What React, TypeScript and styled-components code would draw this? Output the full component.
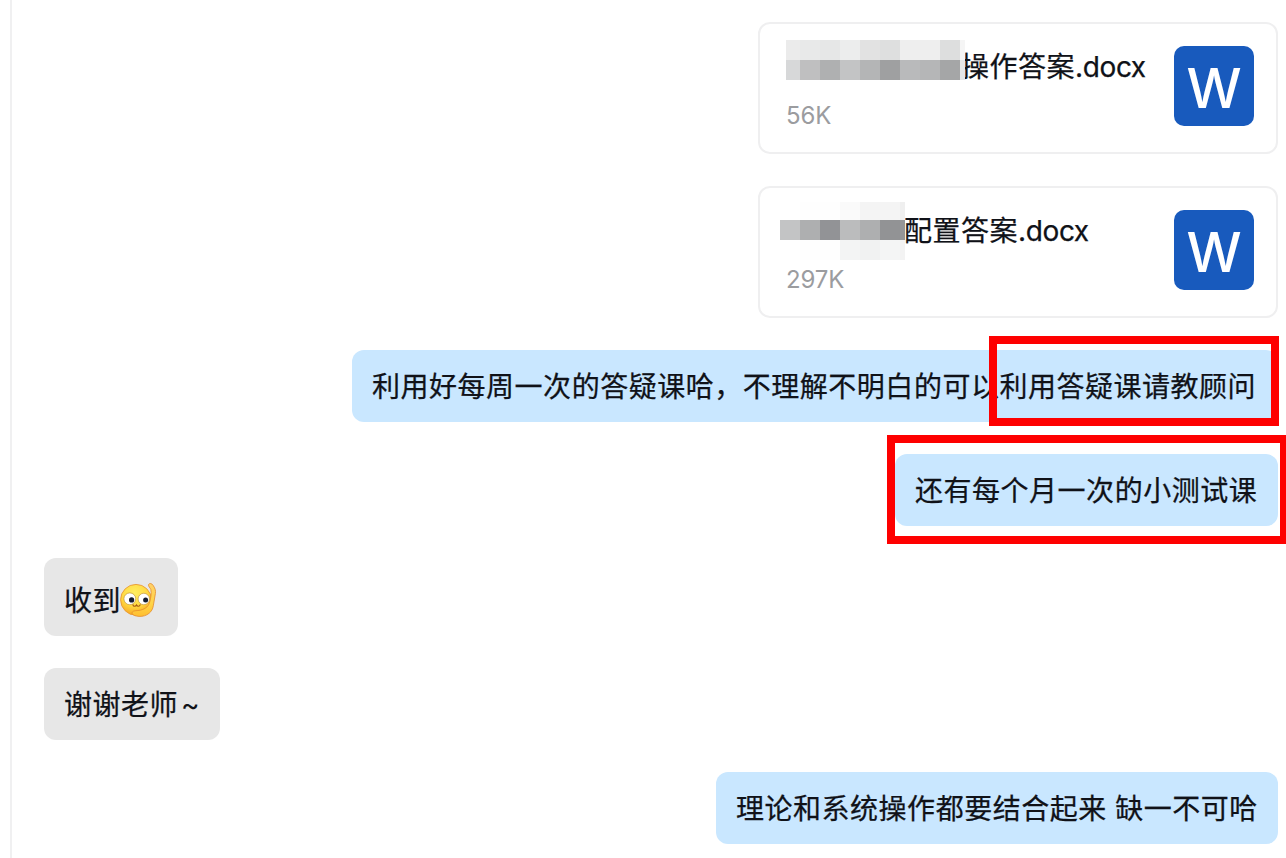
import React from 'react';
import styled, { createGlobalStyle } from 'styled-components';

const GlobalStyle = createGlobalStyle`
  * { box-sizing: border-box; }
  body { margin: 0; background: #fff; overflow: hidden; }
`;

const Page = styled.main`
  width: 1286px;
  height: 858px;
  padding-left: 10px;
  overflow: hidden;
  background: #fff;
  color: #101218;
  font-family: Inter, 'Noto Sans CJK SC', sans-serif;
  font-size: 28px;
`;

const Conversation = styled.section`
  height: 858px;
  padding: 22px 8px 0 32px;
  border-left: 2px solid #f0f0f1;
  display: flex;
  flex-direction: column;
  gap: 32px;
`;

const FileCard = styled.article`
  align-self: flex-end;
  flex: none;
  width: 520px;
  height: 132px;
  padding: 0 22px 0 26px;
  border: 2px solid #efeff0;
  border-radius: 12px;
  display: flex;
  align-items: flex-start;
  justify-content: space-between;
`;

const FileInfo = styled.div`
  display: flex;
  flex-direction: column;
  padding-top: 16px;
`;

const FileName = styled.div<{ $start: number }>`
  position: relative;
  height: 52px;
  padding-left: ${(p) => p.$start}px;
  line-height: 54px;
  letter-spacing: -0.38px;
  white-space: nowrap;
  -webkit-text-stroke: 0.25px currentColor;
`;

const Chinese = styled.span`
  letter-spacing: 0.5px;
`;

const FileSize = styled.div`
  height: 32px;
  margin-top: 8px;
  color: #9b9c9f;
  font-size: 24px;
  line-height: 32px;
  letter-spacing: -0.15px;
`;

const WordIcon = styled.div`
  width: 80px;
  height: 80px;
  margin-top: 22px;
  padding-top: 4px;
  border-radius: 10px;
  background: #185abd;
  color: #fff;
  display: flex;
  align-items: center;
  justify-content: center;
  font: 500 55px/84px Inter, sans-serif;
`;

const Mosaic = styled.div<{ $left: number; $top: number }>`
  position: absolute;
  left: ${(p) => p.$left}px;
  top: ${(p) => p.$top}px;
  display: flex;
  flex-direction: column;
`;

const MosaicRow = styled.div<{ $height: number }>`
  display: flex;
  height: ${(p) => p.$height}px;
`;

const MosaicCell = styled.span<{ $width: number; $color: string }>`
  width: ${(p) => p.$width}px;
  background: ${(p) => p.$color};
`;

const Bubble = styled.div<{ $mine?: boolean; $width: number; $height?: number; $drop?: number }>`
  position: relative;
  flex: none;
  align-self: ${(p) => (p.$mine ? 'flex-end' : 'flex-start')};
  width: ${(p) => p.$width}px;
  height: ${(p) => p.$height ?? 72}px;
  padding: ${(p) => p.$drop ?? 2}px 20px 0;
  border-radius: 12px;
  background: ${(p) => (p.$mine ? '#c9e7ff' : '#e7e7e7')};
  display: flex;
  align-items: center;
  letter-spacing: 0.52px;
  line-height: 40px;
  white-space: pre;
  -webkit-text-stroke: 0.25px currentColor;
`;

const Highlight = styled.span<{ $x: number; $y: number; $w: number; $h: number }>`
  position: absolute;
  left: ${(p) => p.$x}px;
  top: ${(p) => p.$y}px;
  width: ${(p) => p.$w}px;
  height: ${(p) => p.$h}px;
  border: 8px solid #fe0000;
`;

const Tilde = styled.span`
  margin-left: 3px;
  -webkit-text-stroke: 0;
`;

const EmojiIcon = styled.svg`
  flex: none;
  width: 38px;
  height: 38px;
  margin-left: -2px;
`;

type MosaicData = { left: number; top: number; widths: number[]; rows: { height: number; colors: string[] }[] };

const files: { name: string; ext: string; size: string; start: number; mosaic: MosaicData }[] = [
  {
    name: '操作答案', ext: '.docx', size: '56K', start: 175,
    mosaic: {
      left: 0, top: 0, widths: [14, 20, 20, 20, 20, 20, 20, 20, 20, 5],
      rows: [
        { height: 20, colors: ['#ebebeb', '#e8e9e9', '#e6e7e7', '#eceded', '#e2e2e2', '#dedfdf', '#eeeeee', '#eeeeee', '#dddede', '#f5f5f5'] },
        { height: 20, colors: ['#d7d8d9', '#bfbfc0', '#afb0b1', '#c3c4c5', '#b4b5b6', '#9fa0a1', '#b9babb', '#b5b6b7', '#a5a6a7', '#e5e6e7'] },
      ],
    },
  },
  {
    name: '配置答案', ext: '.docx', size: '297K', start: 118,
    mosaic: {
      left: -6, top: -2, widths: [20, 20, 20, 20, 20, 20, 5],
      rows: [
        { height: 18, colors: ['#ffffff', '#fefefe', '#fefefe', '#fafafa', '#f4f4f4', '#f4f4f4', '#efefef'] },
        { height: 20, colors: ['#c3c4c5', '#aeafb0', '#929396', '#bbbcbd', '#aeafb0', '#929395', '#959698'] },
        { height: 20, colors: ['#ffffff', '#fefefe', '#fefefe', '#f3f4f4', '#f1f2f2', '#f4f5f5', '#f3f3f3'] },
      ],
    },
  },
];

function Pixelation({ left, top, widths, rows }: MosaicData) {
  return (
    <Mosaic $left={left} $top={top}>
      {rows.map((row, r) => (
        <MosaicRow key={r} $height={row.height}>
          {row.colors.map((color, c) => <MosaicCell key={c} $width={widths[c]} $color={color} />)}
        </MosaicRow>
      ))}
    </Mosaic>
  );
}

function SaluteEmoji() {
  return (
    <EmojiIcon viewBox="0 0 38 38" aria-hidden="true">
      <defs>
        <radialGradient id="face" cx="45%" cy="28%" r="72%">
          <stop offset="0" stopColor="#ffee62" />
          <stop offset=".6" stopColor="#ffd840" />
          <stop offset="1" stopColor="#f7a624" />
        </radialGradient>
        <linearGradient id="hand" x1="0" y1="0" x2="0" y2="1">
          <stop offset="0" stopColor="#ffd068" />
          <stop offset=".6" stopColor="#ffd548" />
          <stop offset="1" stopColor="#ffbe30" />
        </linearGradient>
      </defs>
      <g stroke="none" transform="translate(0 -1)">
        <circle cx="17" cy="18.8" r="15.4" fill="url(#face)" stroke="#e99a34" strokeWidth=".9" />
        <path d="M29.6 3.4c1-1.6 3.2-1 4.4.8 2.2 3 2.9 5.6 2.4 8.4l-2.1 12.2c-.5 3.2-1.9 5.6-4.2 7.5-2.6 2.2-6.2 3.3-10 3.1-3-.2-6.2-1-6.9-2.6-.6-1.6.7-2.8 2.8-3 4.2-.3 7.1-.7 10-2.4 3-1.8 4.2-4 5-7.4.8-3.6 1.7-7.8.8-11.5-.3-1.4-2.9-3.2-2.2-5.1Z" fill="url(#hand)" stroke="#e58c2c" strokeWidth=".8" strokeLinejoin="round" />
        <circle cx="10.8" cy="17.8" r="5.9" fill="#fff" stroke="#b98a38" strokeWidth=".6" />
        <circle cx="24.8" cy="18" r="5.7" fill="#fff" stroke="#b98a38" strokeWidth=".6" />
        <circle cx="12.6" cy="18.9" r="2.6" fill="#141c30" />
        <circle cx="26.6" cy="18.9" r="2.5" fill="#141c30" />
        <path d="M14 23.8c.3 1.8 2.7 2 3.5.3.8 1.7 3.1 1.5 3.6-.3" fill="none" stroke="#a65b13" strokeWidth="1.2" strokeLinecap="round" />
      </g>
    </EmojiIcon>
  );
}

export default function App() {
  return (
    <>
      <GlobalStyle />
      <Page>
        <Conversation>
          {files.map((file) => (
            <FileCard key={file.size}>
              <FileInfo>
                <FileName $start={file.start}>
                  <Chinese>{file.name}</Chinese>{file.ext}
                  <Pixelation {...file.mosaic} />
                </FileName>
                <FileSize>{file.size}</FileSize>
              </FileInfo>
              <WordIcon>W</WordIcon>
            </FileCard>
          ))}
          <Bubble $mine $width={926}>
            利用好每周一次的答疑课哈，不理解不明白的可以利用答疑课请教顾问
            <Highlight $x={637} $y={-14} $w={290} $h={90} />
          </Bubble>
          <Bubble $mine $width={383}>
            还有每个月一次的小测试课
            <Highlight $x={-8} $y={-19} $w={401} $h={109} />
          </Bubble>
          <Bubble $width={134} $height={78} $drop={7}>收到<SaluteEmoji /></Bubble>
          <Bubble $width={176}>谢谢老师<Tilde>~</Tilde></Bubble>
          <Bubble $mine $width={562}>理论和系统操作都要结合起来 缺一不可哈</Bubble>
        </Conversation>
      </Page>
    </>
  );
}
